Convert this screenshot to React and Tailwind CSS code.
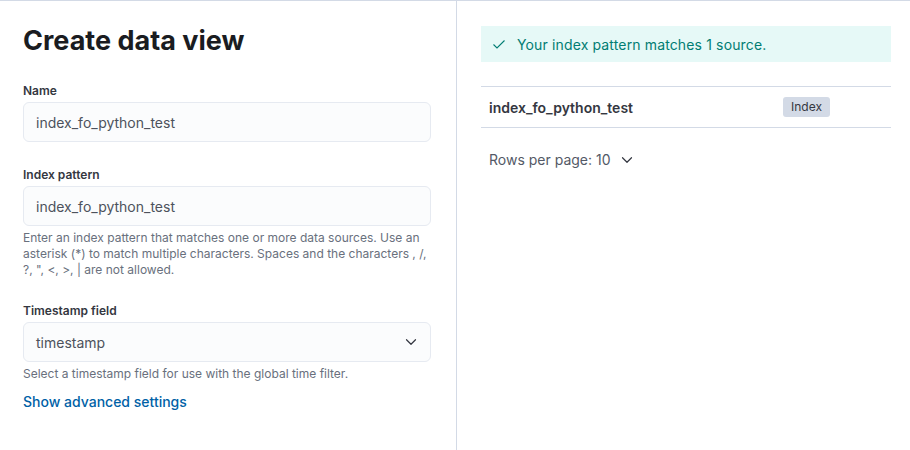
import { ChevronDown } from 'lucide-react'

const FONT = { fontFamily: 'Inter, "Noto Sans", sans-serif' }

function Label({ children, className = '' }) {
  return (
    <div className={`mb-[3px] text-[12px] font-semibold leading-[16px] text-[#343741] ${className}`}>
      {children}
    </div>
  )
}

function TextField({ value, select = false }) {
  return (
    <div className="flex h-10 items-center justify-between rounded-[6px] border border-[#e6eaf1] bg-[#fbfcfd] pl-3 pr-[10px] text-[14px] text-[#4d525c]">
      <span>{value}</span>
      {select && <ChevronDown className="h-[18px] w-[18px] text-[#343741]" strokeWidth={1.6} />}
    </div>
  )
}

function Help({ children, className = '' }) {
  return (
    <p className={`mt-1 text-[12px] leading-[16px] text-[#69707d] ${className}`}>{children}</p>
  )
}

export default function App() {
  return (
    <div style={FONT} className="flex h-[450px] w-[910px] border-t border-[#d3dae6] bg-white">
      <section className="w-[457px] shrink-0 border-r border-[#d3dae6] pl-[23px] pr-[25px] pt-[22px]">
        <h1 className="text-[27px] font-bold leading-[36px] text-[#1a1c21]">Create data view</h1>

        <Label className="mt-6">Name</Label>
        <TextField value="index_fo_python_test" />

        <Label className="mt-[25px]">Index pattern</Label>
        <TextField value="index_fo_python_test" />
        <Help>
          Enter an index pattern that matches one or more data sources. Use an asterisk (*) to match
          multiple characters. Spaces and the characters , /, ?, ", &lt;, &gt;, | are not allowed.
        </Help>

        <Label className="mt-[25px]">Timestamp field</Label>
        <TextField value="timestamp" select />
        <Help>Select a timestamp field for use with the global time filter.</Help>

        <button
          type="button"
          className="mt-[10px] block text-[14px] font-medium leading-[20px] text-[#0061a6]"
        >
          Show advanced settings
        </button>
      </section>

      <section className="flex-1 pl-6 pr-[19px] pt-[25px]">
        <div className="flex h-9 items-center gap-[11px] bg-[#e6f9f7] pl-[11px] text-[14px] tracking-[0.01em] text-[#017d73]">
          <svg width="14" height="14" viewBox="0 0 14 14" fill="none">
            <path d="M1.5 7.5 L5 11 L12.5 3.5" stroke="#017d73" strokeWidth="1.1" />
          </svg>
          <span>Your index pattern matches 1 source.</span>
        </div>

        <div className="mt-6 flex h-[42px] items-center border-y border-[#d3dae6]">
          <div className="w-[302px] pl-2 text-[14px] font-semibold text-[#343741]">
            index_fo_python_test
          </div>
          <span className="rounded-[3px] bg-[#d3dae6] px-2 text-[12px] leading-[20px] text-[#343741]">
            Index
          </span>
        </div>

        <div className="mt-[22px] flex items-center gap-[7px] pl-2 text-[14px] leading-[20px] text-[#535966]">
          <span>Rows per page: 10</span>
          <ChevronDown className="h-[18px] w-[18px] text-[#343741]" strokeWidth={1.6} />
        </div>
      </section>
    </div>
  )
}
